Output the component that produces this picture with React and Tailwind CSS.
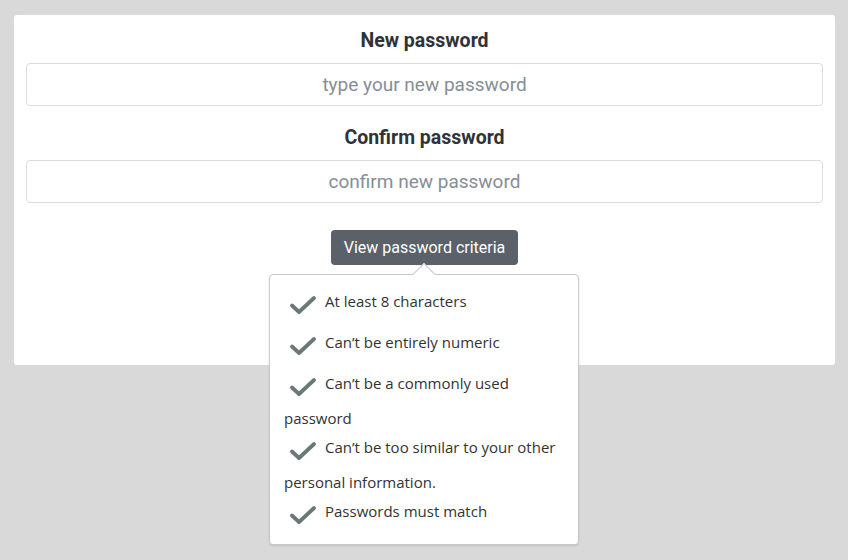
import React from 'react';

const criteria = [
  'At least 8 characters',
  'Can\u2019t be entirely numeric',
  'Can\u2019t be a commonly used password',
  'Can\u2019t be too similar to your other personal information.',
  'Passwords must match',
];

function Check() {
  return (
    <svg width="28" height="20" viewBox="0 0 28 20" className="block">
      <path
        d="M3 10.5 L10 17 L25 3"
        fill="none"
        stroke="#6b7878"
        strokeWidth="3.8"
        strokeLinecap="round"
        strokeLinejoin="round"
      />
    </svg>
  );
}

export default function App() {
  return (
    <div className="min-h-[560px] bg-[#d8d9d8] pt-[15px] pl-[14px] font-['Roboto',sans-serif]">
      <div className="w-[821px] h-[350px] bg-white rounded-[3px] px-[12px] pt-[18px]">
        <label className="block text-center text-[19.5px] font-bold text-[#2f3337] leading-[44px] -mt-[16px] pt-[2px]">
          New password
        </label>
        <input
          type="password"
          placeholder="type your new password"
          className="block w-full h-[43px] border border-[#dcdcdc] rounded-[4px] text-center text-[19px] placeholder:text-[#868e96] outline-none"
        />
        <label className="block text-center text-[19.5px] font-bold text-[#2f3337] leading-[20px] mt-[22px] mb-[12px]">
          Confirm password
        </label>
        <input
          type="password"
          placeholder="confirm new password"
          className="block w-full h-[43px] border border-[#dcdcdc] rounded-[4px] text-center text-[19px] placeholder:text-[#868e96] outline-none"
        />
        <div className="relative flex justify-center mt-[27px]">
          <button className="h-[35px] px-[13px] bg-[#5a6168] text-white text-[16px] rounded-[4px]">
            View password criteria
          </button>
          <div className="absolute left-[243px] top-[44px] w-[310px] bg-white border border-[#c9c9c9] rounded-[4px] shadow-[0_1px_2px_rgba(0,0,0,0.12)] pt-[15px] pb-[9px] px-[14px] text-[15px] text-[#333] font-['Open_Sans',sans-serif]">
            <div className="absolute -top-[9px] left-[146px] w-[16px] h-[16px] rotate-45 bg-white border-l border-t border-[#c9c9c9]" />
            <div className="space-y-[6px]">
              {criteria.map((c) => (
                <p key={c} className="leading-[23px]">
                  <span className="inline-block align-top h-[35px] w-[41px] pl-[5px] pt-[5px]">
                    <Check />
                  </span>
                  {c}
                </p>
              ))}
            </div>
          </div>
        </div>
      </div>
    </div>
  );
}
